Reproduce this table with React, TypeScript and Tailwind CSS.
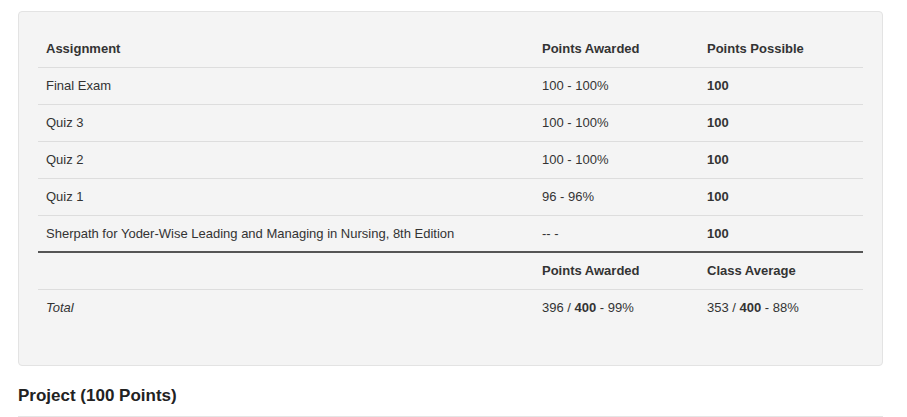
const rows = [
  { name: 'Final Exam', awarded: '100 - 100%', possible: '100' },
  { name: 'Quiz 3', awarded: '100 - 100%', possible: '100' },
  { name: 'Quiz 2', awarded: '100 - 100%', possible: '100' },
  { name: 'Quiz 1', awarded: '96 - 96%', possible: '100' },
  { name: 'Sherpath for Yoder-Wise Leading and Managing in Nursing, 8th Edition', awarded: '-- -', possible: '100' },
];

export default function App() {
  return (
    <div className="min-h-screen bg-white pl-[18px] pr-[24px] pt-[11px] text-[13px] leading-5 text-[#333] font-['Liberation_Sans',Arial,sans-serif]">
      <div className="rounded border border-[#e3e3e3] bg-[#f4f4f4] p-[19px]">
        <table className="mb-5 w-full border-collapse">
          <thead>
            <tr className="border-b border-[#ddd]">
              <th className="p-2 text-left font-bold">Assignment</th>
              <th className="w-[165px] p-2 text-left font-bold">Points Awarded</th>
              <th className="w-[164px] p-2 text-left font-bold">Points Possible</th>
            </tr>
          </thead>
          <tbody>
            {rows.map((r, i) => {
              const last = i === rows.length - 1;
              const cell = last ? 'px-2 pt-2 pb-[7px]' : 'p-2';
              return (
                <tr key={r.name} className={last ? 'border-b-2 border-[#555]' : 'border-b border-[#ddd]'}>
                  <td className={cell}>{r.name}</td>
                  <td className={cell}>{r.awarded}</td>
                  <td className={cell + ' font-bold'}>{r.possible}</td>
                </tr>
              );
            })}
            <tr className="border-b border-[#ddd]">
              <td className="p-2"></td>
              <td className="p-2 font-bold">Points Awarded</td>
              <td className="p-2 font-bold">Class Average</td>
            </tr>
            <tr>
              <td className="p-2 italic">Total</td>
              <td className="p-2">396 / <b>400</b> - 99%</td>
              <td className="p-2">353 / <b>400</b> - 88%</td>
            </tr>
          </tbody>
        </table>
      </div>
      <h3 className="mt-[20px] border-b border-[#e5e5e5] pb-[10px] text-[17px] font-bold leading-5 text-[#222]">
        Project (100 Points)
      </h3>
    </div>
  );
}
